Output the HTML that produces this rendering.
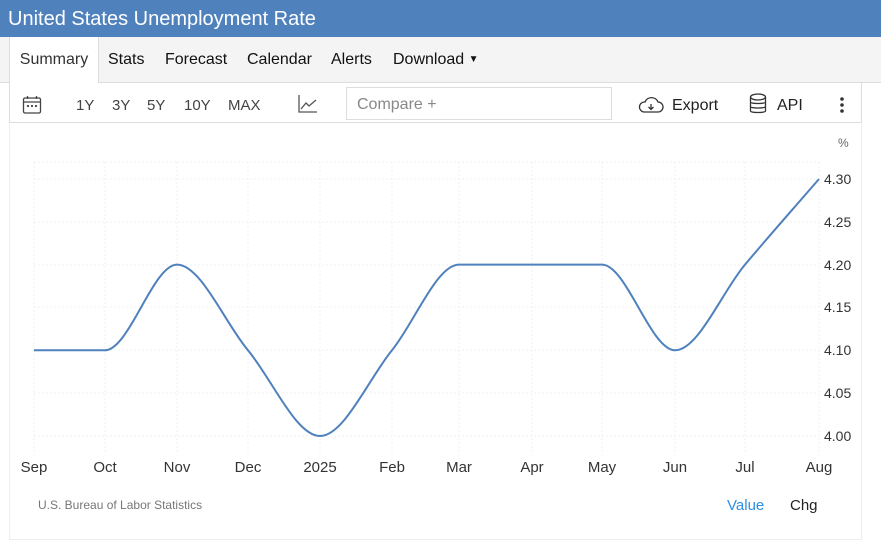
<!DOCTYPE html>
<html><head><style>
body{margin:0;width:881px;height:546px;background:#fff;font-family:"Liberation Sans",Arial,sans-serif;position:relative;overflow:hidden}
.hd{position:absolute;left:0;top:0;width:881px;height:37px;background:#4f81bd;color:#fff;font-size:20px;line-height:38px;padding-left:8px;box-sizing:border-box}
.tabs{position:absolute;left:0;top:37px;width:881px;height:45px;background:#f4f4f4;border-bottom:1px solid #ddd}
.tab{position:absolute;top:0;height:45px;line-height:46px;font-size:16px;color:#111}
.act{left:9px;width:88px;background:#fff;border-left:1px solid #ddd;border-right:1px solid #ddd;text-align:center;height:46px;color:#333}
.tb{position:absolute;left:9px;top:83px;width:853px;height:40px;border:1px solid #ddd;border-top:none;box-sizing:border-box;background:#fff}
.t{position:absolute;top:0;line-height:45px;font-size:15px;color:#444}
.cmp{position:absolute;left:336px;top:4px;width:266px;height:33px;border:1px solid #ddd;box-sizing:border-box;color:#888;font-size:16px;line-height:33px;padding-left:10px}
.ch{position:absolute;left:9px;top:124px;width:853px;height:416px;border:1px solid #eee;border-top:none;box-sizing:border-box}
svg text{font-family:"Liberation Sans",Arial,sans-serif}
</style></head><body>
<div class="hd">United States Unemployment Rate</div>
<div class="tabs">
<div class="tab act">Summary</div>
<div class="tab" style="left:108px">Stats</div>
<div class="tab" style="left:165px">Forecast</div>
<div class="tab" style="left:247px">Calendar</div>
<div class="tab" style="left:331px">Alerts</div>
<div class="tab" style="left:393px">Download <span style="font-size:10px;vertical-align:2px">&#9660;</span></div>
</div>
<div class="tb">
<svg style="position:absolute;left:12px;top:12px" width="20" height="20" viewBox="0 0 20 20" fill="none" stroke="#444" stroke-width="1.3"><rect x="1.5" y="3" width="17" height="15" rx="1.5"/><line x1="1.5" y1="7" x2="18.5" y2="7"/><line x1="5.5" y1="1" x2="5.5" y2="4"/><line x1="14.5" y1="1" x2="14.5" y2="4"/><circle cx="6" cy="11" r=".5"/><circle cx="10" cy="11" r=".5"/><circle cx="14" cy="11" r=".5"/></svg>
<div class="t" style="left:66px">1Y</div><div class="t" style="left:102px">3Y</div><div class="t" style="left:137px">5Y</div><div class="t" style="left:174px">10Y</div><div class="t" style="left:218px">MAX</div>
<svg style="position:absolute;left:288px;top:11px" width="20" height="20" viewBox="0 0 20 20" fill="none" stroke="#555" stroke-width="1.3"><path d="M1 1V18H19"/><path d="M3 15L8 9L11 12L18 6"/></svg>
<div class="cmp">Compare +</div>
<svg style="position:absolute;left:628px;top:13px" width="26" height="18" viewBox="0 0 26 18" fill="none" stroke="#333" stroke-width="1.3"><path d="M6 16H20A5 5 0 0 0 20 6A7 7 0 0 0 7 6A5 5 0 0 0 6 16Z"/><path d="M13 8V13M10.5 11L13 13.5L15.5 11" /></svg>
<div class="t" style="left:662px;font-size:16px;color:#222">Export</div>
<svg style="position:absolute;left:739px;top:10px" width="18" height="22" viewBox="0 0 18 22" fill="none" stroke="#333" stroke-width="1.3"><ellipse cx="9" cy="4" rx="7.5" ry="3"/><path d="M1.5 4V18C1.5 20 16.5 20 16.5 18V4M1.5 9C1.5 11 16.5 11 16.5 9M1.5 13.5C1.5 15.5 16.5 15.5 16.5 13.5"/></svg>
<div class="t" style="left:767px;font-size:16px;color:#222">API</div>
<svg style="position:absolute;left:829px;top:13px" width="6" height="18"><circle cx="3" cy="3" r="1.8" fill="#333"/><circle cx="3" cy="9" r="1.8" fill="#333"/><circle cx="3" cy="15" r="1.8" fill="#333"/></svg>
</div>
<div class="ch"></div>
<svg style="position:absolute;left:0;top:0" width="881" height="546">
<g stroke="#f0f0f0" stroke-width="1" stroke-dasharray="2,2">
<line x1="34" y1="162" x2="819" y2="162"/>
<line x1="34" y1="179" x2="819" y2="179"/><line x1="34" y1="222" x2="819" y2="222"/><line x1="34" y1="265" x2="819" y2="265"/><line x1="34" y1="307" x2="819" y2="307"/><line x1="34" y1="350" x2="819" y2="350"/><line x1="34" y1="393" x2="819" y2="393"/><line x1="34" y1="436" x2="819" y2="436"/>
<line x1="34" y1="162" x2="34" y2="455"/><line x1="105" y1="162" x2="105" y2="455"/><line x1="177" y1="162" x2="177" y2="455"/><line x1="248" y1="162" x2="248" y2="455"/><line x1="320" y1="162" x2="320" y2="455"/><line x1="392" y1="162" x2="392" y2="455"/><line x1="459" y1="162" x2="459" y2="455"/><line x1="532" y1="162" x2="532" y2="455"/><line x1="602" y1="162" x2="602" y2="455"/><line x1="675" y1="162" x2="675" y2="455"/><line x1="745" y1="162" x2="745" y2="455"/><line x1="819" y1="162" x2="819" y2="455"/>
</g>
<path d="M34 350.3L105 350.3C129 350.3 153 264.6 177 264.6C200.7 264.6 224.3 321.9 248 350.3C272 379.1 296 436 320 436C344 436 368 379.8 392 350.3C414.3 322.8 436.7 264.6 459 264.6L602 264.6C626.3 264.6 650.7 350.3 675 350.3C698.3 350.3 721.7 292.3 745 264.6C769.7 235.2 794.3 207.6 819 179" fill="none" stroke="#4f81bd" stroke-width="2"/>
<g font-size="14" fill="#333">
<text x="838" y="147" font-size="12" fill="#666">%</text>
<text x="824" y="184">4.30</text><text x="824" y="227">4.25</text><text x="824" y="270">4.20</text><text x="824" y="312">4.15</text><text x="824" y="355">4.10</text><text x="824" y="398">4.05</text><text x="824" y="441">4.00</text>
<g font-size="15" text-anchor="middle" fill="#333">
<text x="34" y="472">Sep</text><text x="105" y="472">Oct</text><text x="177" y="472">Nov</text><text x="248" y="472">Dec</text><text x="320" y="472">2025</text><text x="392" y="472">Feb</text><text x="459" y="472">Mar</text><text x="532" y="472">Apr</text><text x="602" y="472">May</text><text x="675" y="472">Jun</text><text x="745" y="472">Jul</text><text x="819" y="472">Aug</text>
</g>
<text x="38" y="509" font-size="12" fill="#777">U.S. Bureau of Labor Statistics</text>
<text x="727" y="510" font-size="15" fill="#2f8fe0">Value</text>
<text x="790" y="510" font-size="15" fill="#222">Chg</text>
</g>
</svg>
</body></html>
